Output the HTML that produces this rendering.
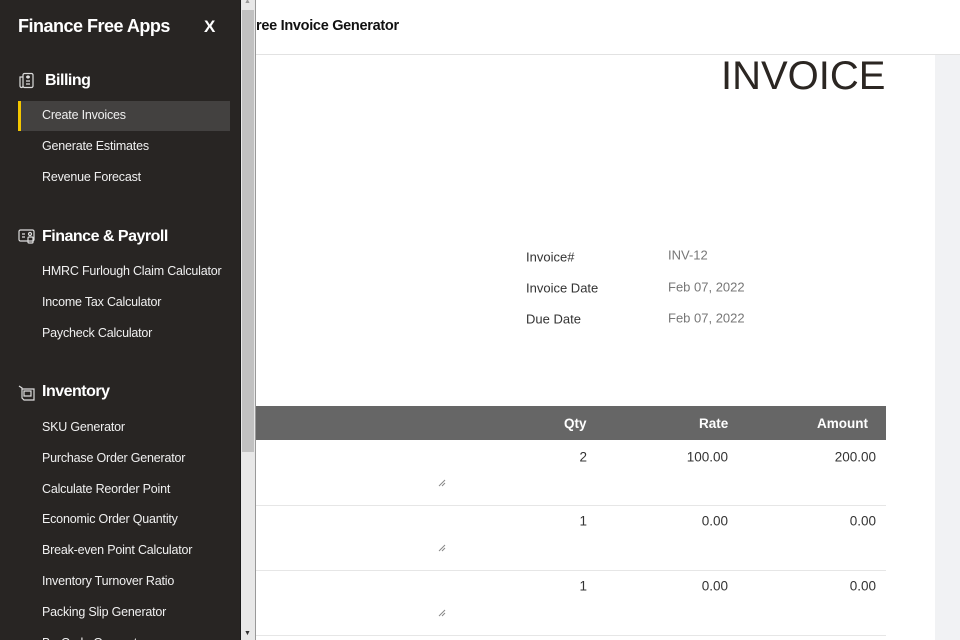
<!DOCTYPE html>
<html><head><style>
*{margin:0;padding:0;box-sizing:border-box}
html,body{width:960px;height:640px;overflow:hidden}
body{background:#fff;font-family:"Liberation Sans",sans-serif;position:relative}
.a{position:absolute;white-space:nowrap}
#side{position:absolute;left:0;top:0;width:240px;height:640px;background:#282523;color:#fff;overflow:hidden}
.it{position:absolute;left:42px;font-size:12.5px;color:#f0f0f0;transform:translateY(-50%);letter-spacing:-0.2px}
.hd{position:absolute;left:42px;font-size:16px;font-weight:bold;transform:translateY(-50%);letter-spacing:-0.5px}
.ic{position:absolute;left:18px;width:17px;height:17px}
.lbl{position:absolute;left:526px;font-size:13px;color:#333;transform:translateY(-50%)}
.val{position:absolute;left:668px;font-size:13px;color:#777;transform:translateY(-50%)}
.num{position:absolute;font-size:13.5px;color:#333;transform:translateY(-50%);text-align:right}
.grip{position:absolute;left:438px;width:8px;height:8px}
</style></head><body>
<div id="side">
<div class="a" style="left:18px;top:16px;font-size:18px;font-weight:bold;letter-spacing:-0.5px">Finance Free Apps</div>
<div class="a" style="left:204px;top:17px;font-size:17px;font-weight:bold">X</div>
<svg class="ic" style="top:72px" viewBox="0 0 17 17" fill="none" stroke="#ddd" stroke-width="1.2"><rect x="5" y="1.5" width="10" height="14" rx="1.5"/><path d="M5 5H2v9a1.5 1.5 0 0 0 3 0M8 5h4M8 9h4M8 12h4"/><circle cx="10" cy="5" r="1"/></svg>
<div class="hd" style="left:45px;top:81px">Billing</div>
<div style="position:absolute;left:18px;top:101px;width:212px;height:30px;background:#434140"></div>
<div style="position:absolute;left:18px;top:101px;width:3px;height:30px;background:#f3c600"></div>
<div class="it" style="top:115px">Create Invoices</div>
<div class="it" style="top:146px">Generate Estimates</div>
<div class="it" style="top:177px">Revenue Forecast</div>
<svg class="ic" style="top:228px" viewBox="0 0 17 17" fill="none" stroke="#ddd" stroke-width="1.2"><rect x="1" y="2" width="15" height="11" rx="1.5"/><path d="M4 6h3M4 9h3"/><circle cx="12" cy="6" r="1.5"/><rect x="10" y="9" width="5" height="6" rx="1"/></svg>
<div class="hd" style="top:237px">Finance &amp; Payroll</div>
<div class="it" style="top:271px">HMRC Furlough Claim Calculator</div>
<div class="it" style="top:302px">Income Tax Calculator</div>
<div class="it" style="top:333px">Paycheck Calculator</div>
<svg class="ic" style="top:384px" viewBox="0 0 17 17" fill="none" stroke="#ddd" stroke-width="1.2"><path d="M1 2l3 2v10l2 2h10V5H4M6 7h7v5H6z"/></svg>
<div class="hd" style="top:392px">Inventory</div>
<div class="it" style="top:427px">SKU Generator</div>
<div class="it" style="top:458px">Purchase Order Generator</div>
<div class="it" style="top:489px">Calculate Reorder Point</div>
<div class="it" style="top:519px">Economic Order Quantity</div>
<div class="it" style="top:550px">Break-even Point Calculator</div>
<div class="it" style="top:581px">Inventory Turnover Ratio</div>
<div class="it" style="top:612px">Packing Slip Generator</div>
<div class="it" style="top:643px">BarCode Generator</div>
</div>
<div style="position:absolute;left:240px;top:0;width:16px;height:640px;background:#e8e8e8;border-left:1px solid #1a1a1a;border-right:1px solid #999"></div>
<div style="position:absolute;left:242px;top:10px;width:12px;height:442px;background:#c1c1c1"></div>
<div class="a" style="left:244px;top:-2px;font-size:7px;color:#999">▲</div>
<div class="a" style="left:244px;top:630px;font-size:7px;color:#333">▼</div>
<div style="position:absolute;left:256px;top:54px;width:704px;height:1px;background:#e2e2e2"></div>
<div class="a" style="left:256px;top:18px;font-size:14.5px;font-weight:bold;color:#111;letter-spacing:-0.3px">ree Invoice Generator</div>
<div style="position:absolute;left:935px;top:55px;width:25px;height:585px;background:#f1f2f4"></div>
<div class="a" style="left:721px;top:54px;font-size:40px;color:#2b2622">INVOICE</div>
<div class="lbl" style="top:257px">Invoice#</div><div class="val" style="top:255px">INV-12</div>
<div class="lbl" style="top:288px">Invoice Date</div><div class="val" style="top:287px">Feb 07, 2022</div>
<div class="lbl" style="top:319px">Due Date</div><div class="val" style="top:318px">Feb 07, 2022</div>
<div style="position:absolute;left:256px;top:406px;width:630px;height:34px;background:#666"></div>
<div class="a" style="left:564px;top:416px;font-size:13.5px;font-weight:bold;color:#fff">Qty</div>
<div class="a" style="left:699px;top:416px;font-size:13.5px;font-weight:bold;color:#fff">Rate</div>
<div class="a" style="left:817px;top:416px;font-size:13.5px;font-weight:bold;color:#fff">Amount</div>
<div class="num" style="left:500px;width:87px;top:457px">2</div>
<div class="num" style="left:600px;width:128px;top:457px">100.00</div>
<div class="num" style="left:750px;width:126px;top:457px">200.00</div>
<div class="num" style="left:500px;width:87px;top:521px">1</div>
<div class="num" style="left:600px;width:128px;top:521px">0.00</div>
<div class="num" style="left:750px;width:126px;top:521px">0.00</div>
<div class="num" style="left:500px;width:87px;top:586px">1</div>
<div class="num" style="left:600px;width:128px;top:586px">0.00</div>
<div class="num" style="left:750px;width:126px;top:586px">0.00</div>
<div style="position:absolute;left:256px;top:505px;width:630px;height:1px;background:#e6e6e6"></div>
<div style="position:absolute;left:256px;top:570px;width:630px;height:1px;background:#e6e6e6"></div>
<div style="position:absolute;left:256px;top:635px;width:630px;height:1px;background:#e6e6e6"></div>
<svg class="grip" style="top:479px" viewBox="0 0 8 8" stroke="#888"><path d="M1 7L7 1M4 7L7 4"/></svg>
<svg class="grip" style="top:544px" viewBox="0 0 8 8" stroke="#888"><path d="M1 7L7 1M4 7L7 4"/></svg>
<svg class="grip" style="top:609px" viewBox="0 0 8 8" stroke="#888"><path d="M1 7L7 1M4 7L7 4"/></svg>
</body></html>
